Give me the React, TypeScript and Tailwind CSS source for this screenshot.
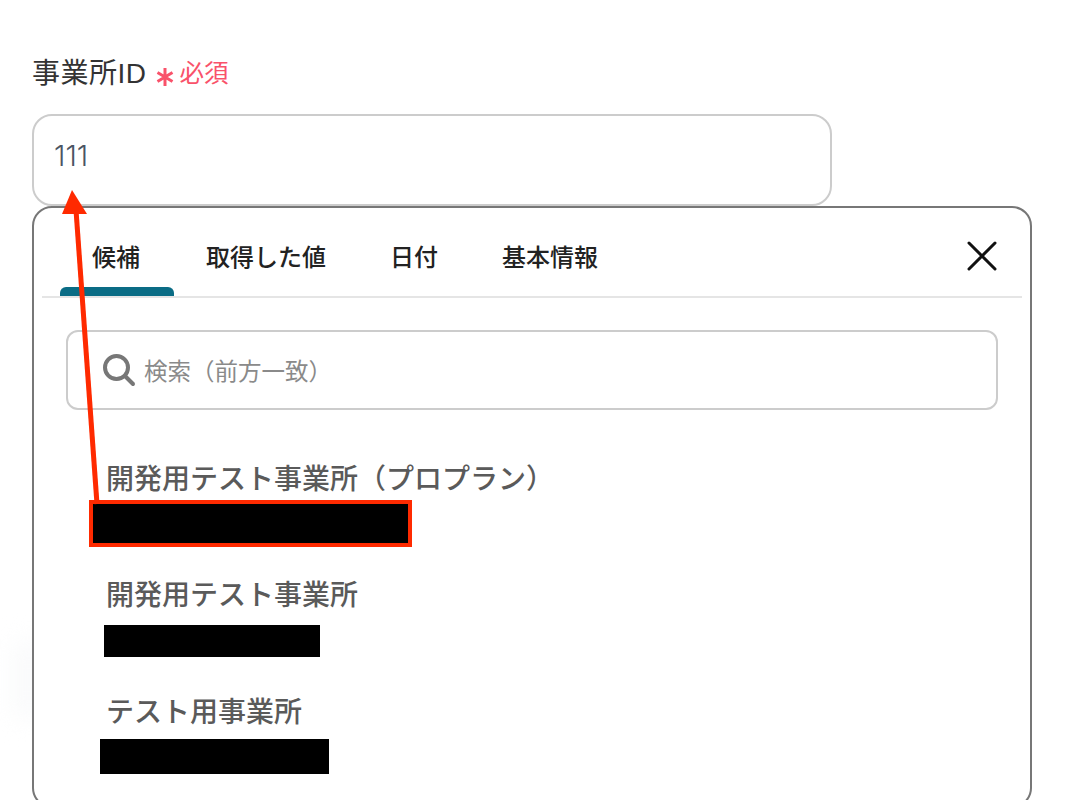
const font = { fontFamily: '"Liberation Sans", "Noto Sans CJK JP", sans-serif' };

const tabs = ['候補', '取得した値', '日付', '基本情報'];

function Tab({ label, active }: { label: string; active: boolean }) {
  return (
    <div className={`relative h-[88px] pl-8 pt-[32px] text-[24px] leading-[36px] font-[560] text-[#222222] ${active ? 'pr-[34px]' : 'pr-8'}`}>
      {label}
      {active && <div className="absolute bottom-0 left-0 right-0 h-[9px] rounded-t-[6px] bg-[#0a6c85]" />}
    </div>
  );
}

function Item({ name, className, top }: { name: string; className: string; top: string }) {
  return (
    <div className={top}>
      <div className="text-[28px] leading-[40px] font-[560] text-[#5a5a5a]">{name}</div>
      <div className={`bg-black ${className}`} />
    </div>
  );
}

export default function App() {
  return (
    <div className="relative h-[800px] w-[1074px] overflow-hidden bg-white" style={font}>
      {/* faint shadow left of the panel */}
      <div className="absolute left-[14px] top-[640px] h-[80px] w-[30px] rounded-full bg-gray-50 blur-md" />

      <div className="relative pl-8 pt-[56px]">
        {/* Label */}
        <div className="flex h-[36px] items-center">
          <span className="text-[28px] leading-[36px] tracking-[0.5px] text-[#333333]">事業所ID</span>
          <span className="ml-[9px] text-[#f9526a]">
            <svg width="18" height="18" viewBox="0 0 18 18" className="mt-[6px]" fill="none" stroke="currentColor" strokeWidth="3">
              <path d="M9 0v18M1.5 4.5l15 9M16.5 4.5l-15 9" />
            </svg>
          </span>
          <span className="ml-[6px] text-[24.5px] leading-[36px] text-[#f9526a]">必須</span>
        </div>

        {/* Input */}
        <div
          className="mt-[22px] flex h-[92px] w-[800px] items-center rounded-[20px] border-2 border-[#cccccc] bg-white pb-[8px] pl-[20px] text-[29px] font-light text-[#4b5563]"
          style={{ fontFamily: 'Inter, sans-serif' }}
        >
          111
        </div>

        {/* Panel */}
        <div className="h-[602px] w-[1000px] rounded-[20px] border-2 border-[#777777] bg-white px-[8px]">
          <div className="flex items-start border-b-2 border-[#e5e5e5] pl-[18px]">
            <div className="flex h-[88px] items-start">
              {tabs.map((t, i) => (
                <Tab key={t} label={t} active={i === 0} />
              ))}
            </div>
            <svg width="32" height="32" viewBox="0 0 32 32" className="ml-auto mr-[24px] mt-[32px]" fill="none" stroke="#111111" strokeWidth="3" strokeLinecap="round">
              <path d="M3 3l26 26M29 3L3 29" />
            </svg>
          </div>

          {/* Search */}
          <div className="mx-[24px] mt-[32px] flex h-[80px] items-center rounded-[12px] border-2 border-[#cccccc] pl-[34px]">
            <svg width="34" height="34" viewBox="0 0 34 34" fill="none" stroke="#777777" strokeWidth="4" strokeLinecap="round">
              <circle cx="14.5" cy="14.5" r="11.5" />
              <path d="M23 23l8 8" />
            </svg>
            <span className="ml-[8px] mt-[5px] text-[23.5px] text-[#8a8a8a]">検索（前方一致）</span>
          </div>

          {/* Results */}
          <div className="mt-[50px] flex flex-col pl-[64px]">
            <Item name="開発用テスト事業所（プロプラン）" className="ml-[-15px] mt-[2px] h-[42px] w-[318px]" top="" />
            <Item name="開発用テスト事業所" className="ml-[-2px] mt-[9px] h-[32px] w-[216px]" top="mt-[32px]" />
            <Item name="テスト用事業所" className="ml-[-6px] mt-[6px] h-[35px] w-[229px]" top="mt-[36px]" />
          </div>
        </div>
      </div>

      {/* Red annotation */}
      <div className="absolute left-[89px] top-[500px] h-[47px] w-[323px] border-4 border-[#ff2a00]" />
      <svg className="absolute left-0 top-0" width="1074" height="800" fill="none">
        <path d="M97 504L76 210" stroke="#ff2a00" strokeWidth="5" />
        <path d="M72 190L87 214L62 214Z" fill="#ff2a00" />
      </svg>
    </div>
  );
}
